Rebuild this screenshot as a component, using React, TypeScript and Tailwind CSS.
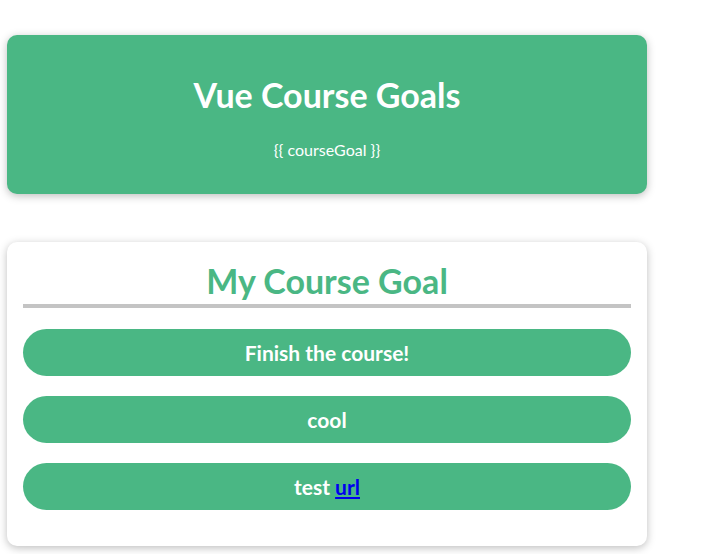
export default function App() {
  const goals = [
    { text: "Finish the course!" },
    { text: "cool" },
    { text: "test", link: "url" },
  ];
  return (
    <div className="min-h-[554px] bg-white pt-[35px] pl-[7px]" style={{ fontFamily: "Lato, 'Liberation Sans', sans-serif" }}>
      <header className="flex h-[159px] w-[640px] flex-col items-center rounded-[10px] bg-[#4ab784] pt-[43px] text-white shadow-[0_2px_8px_rgba(0,0,0,0.26)]">
        <h2 className="text-[34px] font-bold leading-none">Vue Course Goals</h2>
        <p className="mt-[30px] text-[16px] leading-none">{"{{ courseGoal }}"}</p>
      </header>
      <section className="mt-[48px] w-[640px] rounded-[10px] bg-white px-4 pt-[22px] pb-[36px] shadow-[0_2px_8px_rgba(0,0,0,0.26)]">
        <h2 className="border-b-4 border-[#c4c4c4] pb-[6px] text-center text-[34px] font-bold leading-[34px] text-[#4ab784]">My Course Goal</h2>
        <ul className="mt-[21px] flex flex-col gap-[20px]">
          {goals.map((g) => (
            <li key={g.text} className="flex h-[47px] items-center justify-center rounded-[24px] bg-[#4ab784] text-[21px] font-bold text-white">
              <span>
                {g.text}
                {g.link && (
                  <>
                    {" "}
                    <a href="#" className="text-[#0000ee] underline">{g.link}</a>
                  </>
                )}
              </span>
            </li>
          ))}
        </ul>
      </section>
    </div>
  );
}
